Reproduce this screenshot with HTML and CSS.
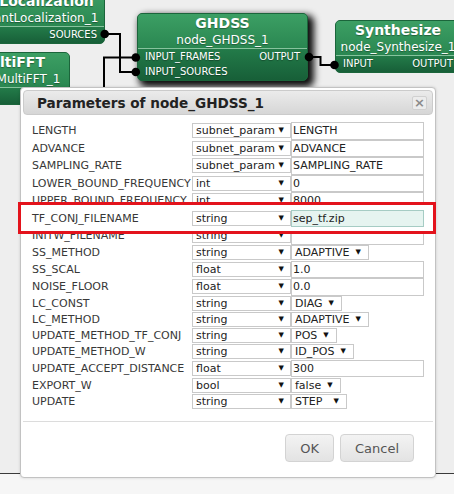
FILE: index.html
```html
<!DOCTYPE html>
<html>
<head>
<meta charset="utf-8">
<title>Parameters of node_GHDSS_1</title>
<link rel="stylesheet" href="styles.css">
</head>
<body>
<div class="canvas">
  <div class="node n-loc">
    <div class="node-head"><div class="node-title">ConstantLocalization</div><div class="node-sub">node_ConstantLocalization_1</div></div>
    <div class="node-ports"><div class="ports-in"></div><div class="ports-out"><div class="port">SOURCES</div></div></div>
  </div>
  <div class="node n-fft">
    <div class="node-head"><div class="node-title">MultiFFT</div><div class="node-sub">node_MultiFFT_1</div></div>
    <div class="node-ports"><div class="ports-in"><div class="port">INPUT</div></div><div class="ports-out"><div class="port">OUTPUT</div></div></div>
  </div>
  <div class="node n-ghdss">
    <div class="node-head"><div class="node-title">GHDSS</div><div class="node-sub">node_GHDSS_1</div></div>
    <div class="node-ports"><div class="ports-in"><div class="port">INPUT_FRAMES</div><div class="port">INPUT_SOURCES</div></div><div class="ports-out"><div class="port">OUTPUT</div></div></div>
  </div>
  <div class="node n-syn">
    <div class="node-head"><div class="node-title">Synthesize</div><div class="node-sub">node_Synthesize_1</div></div>
    <div class="node-ports"><div class="ports-in"><div class="port">INPUT</div></div><div class="ports-out"><div class="port">OUTPUT</div></div></div>
  </div>
  <svg class="wires" width="454" height="473" viewBox="0 0 454 473">
    <g fill="none" stroke="#000" stroke-width="2">
      <path d="M104.7 34 H120 V72 H136"/>
      <path d="M104 120 V57.5 H136"/>
      <path d="M309 57 H320.5 V65 H334.5"/>
    </g>
    <g fill="#000">
      <circle cx="104.7" cy="34" r="4.3"/>
      <circle cx="135.8" cy="57.5" r="4.3"/>
      <circle cx="135.8" cy="72" r="4.3"/>
      <circle cx="309" cy="57" r="4.3"/>
      <circle cx="334.5" cy="65" r="4.3"/>
    </g>
  </svg>
</div>

<div class="dialog">
  <div class="titlebar">
    <span class="title">Parameters of node_GHDSS_1</span>
    <span class="close">×</span>
  </div>
  <div class="content">
    <div class="params">
      <div class="label">LENGTH</div>
      <div class="type"><div class="sel"><span>subnet_param</span><span class="arrow">▼</span></div></div>
      <div class="val"><input type="text" value="LENGTH"></div>

      <div class="label">ADVANCE</div>
      <div class="type"><div class="sel"><span>subnet_param</span><span class="arrow">▼</span></div></div>
      <div class="val"><input type="text" value="ADVANCE"></div>

      <div class="label">SAMPLING_RATE</div>
      <div class="type"><div class="sel"><span>subnet_param</span><span class="arrow">▼</span></div></div>
      <div class="val"><input type="text" value="SAMPLING_RATE"></div>

      <div class="label">LOWER_BOUND_FREQUENCY</div>
      <div class="type"><div class="sel"><span>int</span><span class="arrow">▼</span></div></div>
      <div class="val"><input type="text" value="0"></div>

      <div class="label">UPPER_BOUND_FREQUENCY</div>
      <div class="type"><div class="sel"><span>int</span><span class="arrow">▼</span></div></div>
      <div class="val"><input type="text" value="8000"></div>

      <div class="label front">TF_CONJ_FILENAME</div>
      <div class="type front"><div class="sel"><span>string</span><span class="arrow">▼</span></div></div>
      <div class="val front"><input type="text" class="focused" value="sep_tf.zip"></div>

      <div class="label">INITW_FILENAME</div>
      <div class="type"><div class="sel"><span>string</span><span class="arrow">▼</span></div></div>
      <div class="val"><input type="text" value=""></div>

      <div class="label">SS_METHOD</div>
      <div class="type"><div class="sel"><span>string</span><span class="arrow">▼</span></div></div>
      <div class="val"><div class="vsel"><span>ADAPTIVE</span><span class="arrow">▼</span></div></div>

      <div class="label">SS_SCAL</div>
      <div class="type"><div class="sel"><span>float</span><span class="arrow">▼</span></div></div>
      <div class="val"><input type="text" value="1.0"></div>

      <div class="label">NOISE_FLOOR</div>
      <div class="type"><div class="sel"><span>float</span><span class="arrow">▼</span></div></div>
      <div class="val"><input type="text" value="0.0"></div>

      <div class="label">LC_CONST</div>
      <div class="type"><div class="sel"><span>string</span><span class="arrow">▼</span></div></div>
      <div class="val"><div class="vsel"><span>DIAG</span><span class="arrow">▼</span></div></div>

      <div class="label">LC_METHOD</div>
      <div class="type"><div class="sel"><span>string</span><span class="arrow">▼</span></div></div>
      <div class="val"><div class="vsel"><span>ADAPTIVE</span><span class="arrow">▼</span></div></div>

      <div class="label">UPDATE_METHOD_TF_CONJ</div>
      <div class="type"><div class="sel"><span>string</span><span class="arrow">▼</span></div></div>
      <div class="val"><div class="vsel"><span>POS</span><span class="arrow">▼</span></div></div>

      <div class="label">UPDATE_METHOD_W</div>
      <div class="type"><div class="sel"><span>string</span><span class="arrow">▼</span></div></div>
      <div class="val"><div class="vsel"><span>ID_POS</span><span class="arrow">▼</span></div></div>

      <div class="label">UPDATE_ACCEPT_DISTANCE</div>
      <div class="type"><div class="sel"><span>float</span><span class="arrow">▼</span></div></div>
      <div class="val"><input type="text" value="300"></div>

      <div class="label">EXPORT_W</div>
      <div class="type"><div class="sel"><span>bool</span><span class="arrow">▼</span></div></div>
      <div class="val"><div class="vsel"><span>false</span><span class="arrow">▼</span></div></div>

      <div class="label">UPDATE</div>
      <div class="type"><div class="sel"><span>string</span><span class="arrow">▼</span></div></div>
      <div class="val"><div class="vsel vsel-step"><span>STEP</span><span class="arrow">▼</span></div></div>
    </div>
  </div>
  <div class="buttonpane">
    <button type="button">OK</button>
    <button type="button">Cancel</button>
  </div>
  <div class="highlight"></div>
</div>
</body>
</html>
```

FILE: styles.css
```css
* { box-sizing: border-box; }
html, body { margin: 0; padding: 0; }
body {
  width: 454px;
  height: 494px;
  overflow: hidden;
  position: relative;
  background: #f6f6f6;
  font-family: "DejaVu Sans", Verdana, sans-serif;
}

/* ---------- node canvas ---------- */
.canvas {
  position: relative;
  z-index: 0;
  height: 474px;
  background: #eeeeee;
  border-bottom: 1px solid #3a3a3a;
  overflow: hidden;
}
.wires { position: absolute; left: 0; top: 0; z-index: 2; }

.node {
  position: absolute;
  border: 1px solid #1b653b;
  border-radius: 5px;
  overflow: hidden;
  color: #fff;
  background: #1c6a3f;
  text-shadow: 0 1px 1px rgba(0, 0, 0, 0.35);
}
.node-head {
  height: 34px;
  padding-top: 1px;
  text-align: center;
  white-space: nowrap;
  background: linear-gradient(#3c9f64, #2a8751);
}
.node-title { font-size: 14px; font-weight: bold; line-height: 17px; }
.node-sub { font-size: 12px; line-height: 16px; }
.node-ports {
  display: flex;
  justify-content: space-between;
  border-top: 1px solid #86c39d;
  padding-bottom: 1px;
  background: linear-gradient(#237b49, #175f38);
  font-size: 10px;
}
.port { height: 15px; line-height: 15px; padding: 0 7px; white-space: nowrap; }

.n-loc { left: -99px; top: -9px; width: 204px; }
.n-loc .node-head { padding-left: 16px; }
.n-fft { left: -58px; top: 52px; width: 128px; }
.n-fft .node-head { padding-left: 9px; }
.n-ghdss {
  left: 137px; top: 13px; width: 171px;
  box-shadow: 4px 4px 7px 2px rgba(0, 0, 0, 0.95);
}
.n-syn { left: 335px; top: 20px; width: 126px; }

/* ---------- dialog ---------- */
.dialog {
  position: absolute;
  z-index: 10;
  left: 20px;
  top: 87px;
  width: 416px;
  height: 391px;
  padding: 2px;
  background: #fff;
  border: 1px solid #c2c2c2;
  border-radius: 4px;
  box-shadow: 0 0 3px rgba(0, 0, 0, 0.15);
  display: flex;
  flex-direction: column;
}
.titlebar {
  height: 25px;
  border: 1px solid #cbcbcb;
  border-radius: 4px;
  background: linear-gradient(#ebebeb, #d6d6d6);
  display: flex;
  align-items: center;
  justify-content: space-between;
  padding: 0 5px 0 13px;
}
.title { font-size: 13.6px; font-weight: bold; color: #222; white-space: nowrap; }
.close {
  width: 15px;
  height: 14px;
  border: 1px solid #d0d0d0;
  border-radius: 2px;
  background: #ececec;
  color: #8a8a8a;
  font-size: 13px;
  font-weight: bold;
  line-height: 12px;
  text-align: center;
}

.content { padding: 7px 8px 12px 9px; }
.params {
  display: grid;
  grid-template-columns: 160px 99px 133px;
  font-size: 11px;
}
.label {
  display: flex;
  align-items: center;
  color: #383838;
  white-space: nowrap;
}
.type, .val { display: flex; align-items: center; min-height: 16px; }
.front { position: relative; z-index: 2; }

.sel, .vsel {
  height: 15px;
  border: 1px solid #c9c9c9;
  background: #fff;
  color: #222;
  display: flex;
  align-items: center;
  white-space: nowrap;
}
.sel { width: 100%; justify-content: space-between; padding: 0 6px 0 3px; }
.vsel { padding: 0 7px 0 3px; gap: 6px; }
.vsel-step { width: 56px; justify-content: space-between; }
.arrow { font-size: 7px; color: #111; line-height: 1; }

.val input {
  width: 100%;
  height: 17.5px;
  margin: 0;
  padding: 0 1px;
  border: 1px solid #c9c9c9;
  border-radius: 0;
  background: #fff;
  color: #222;
  font: 11px "DejaVu Sans", Verdana, sans-serif;
  outline: none;
}
.val input.focused {
  background: #e6f4f0;
  border-color: #a6ccc4;
}

.buttonpane {
  border-top: 1px solid #dcdcdc;
  padding: 12px 19px 12px 0;
  display: flex;
  justify-content: flex-end;
  gap: 6px;
}
.buttonpane button {
  height: 28px;
  padding: 0 14px;
  font: 13px "DejaVu Sans", Verdana, sans-serif;
  color: #555;
  background: linear-gradient(#f3f3f3, #e3e3e3);
  border: 1px solid #d3d3d3;
  border-radius: 4px;
}

.highlight {
  position: absolute;
  z-index: 1;
  left: -3px;
  top: 114px;
  width: 418px;
  height: 32px;
  border: 3.5px solid #e3131c;
  background: #fff;
}
```
